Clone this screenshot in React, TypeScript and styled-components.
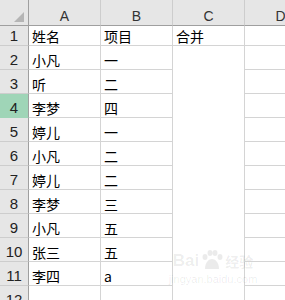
import React from "react";
import styled, { createGlobalStyle } from "styled-components";

const Global = createGlobalStyle`
  html, body { margin: 0; padding: 0; background: #ffffff; overflow: hidden; }
  #root { width: 285px; height: 300px; overflow: hidden; position: relative; }
`;

const Sheet = styled.div`
  display: grid;
  grid-template-columns: 29px 72px 72px 72px 72px;
  grid-template-rows: 26px 20px repeat(11, 24px);
  width: 317px;
  background: #ffffff;
`;

const Corner = styled.div`
  background: #e6e6e6;
  border-right: 1px solid #9f9f9f;
  border-bottom: 1px solid #9f9f9f;
  position: relative;
  &::after {
    content: "";
    position: absolute;
    right: 4px;
    bottom: 3px;
    width: 0;
    height: 0;
    border-left: 10px solid transparent;
    border-bottom: 10px solid #b5b5b5;
  }
`;

const ColHead = styled.div`
  background: #e6e6e6;
  border-right: 1px solid #cdcdcd;
  border-bottom: 1px solid #9f9f9f;
  display: flex;
  align-items: flex-end;
  justify-content: center;
  padding-bottom: 1px;
  box-sizing: border-box;
  font-family: "Liberation Sans", Arial, sans-serif;
  font-size: 14px;
  line-height: 16px;
  color: #333;
`;

const RowHead = styled.div<{ $active?: boolean }>`
  background: ${(p) => (p.$active ? "#9fd5b7" : "#e6e6e6")};
  border-right: 1px solid #9f9f9f;
  border-bottom: 1px solid ${(p) => (p.$active ? "#9fd5b7" : "#cdcdcd")};
  display: flex;
  align-items: flex-end;
  justify-content: center;
  padding-bottom: 1px;
  box-sizing: border-box;
  font-family: "Liberation Sans", Arial, sans-serif;
  font-size: 15px;
  line-height: 17px;
  color: #222;
`;

const Cell = styled.div`
  border-right: 1px solid #d4d4d4;
  border-bottom: 1px solid #d4d4d4;
  display: flex;
  align-items: flex-end;
  padding: 0 0 0 3px;
  box-sizing: border-box;
  font-family: "Noto Sans CJK SC", "Noto Sans", sans-serif;
  font-size: 14px;
  line-height: 18px;
  color: #000;
  white-space: nowrap;
  overflow: hidden;
`;

const Merged = styled(Cell)<{ $span: number }>`
  grid-row: span ${(p) => p.$span};
  border-bottom: none;
`;

const Watermark = styled.div`
  position: absolute;
  left: 166px;
  top: 250px;
  width: 94px;
  display: flex;
  flex-direction: column;
  align-items: center;
  pointer-events: none;
  color: rgba(0, 0, 0, 0.08);
  font-family: "Liberation Sans", Arial, sans-serif;
`;

const WmTop = styled.div`
  display: flex;
  align-items: flex-end;
  gap: 2px;
  font-size: 17px;
  font-weight: bold;
  line-height: 18px;
`;

const WmCn = styled.span`
  font-family: "Noto Sans CJK SC", sans-serif;
  font-size: 14px;
`;

const WmUrl = styled.div`
  font-size: 11px;
  line-height: 13px;
  margin-top: 3px;
`;

const rows: [string, string][] = [
  ["小凡", "一"],
  ["听", "二"],
  ["李梦", "四"],
  ["婷儿", "一"],
  ["小凡", "二"],
  ["婷儿", "二"],
  ["李梦", "三"],
  ["小凡", "五"],
  ["张三", "五"],
  ["李四", "a"],
  ["", ""],
];

export default function App() {
  return (
    <>
      <Global />
      <Sheet>
        <Corner />
        <ColHead>A</ColHead>
        <ColHead>B</ColHead>
        <ColHead>C</ColHead>
        <ColHead>D</ColHead>

        <RowHead>1</RowHead>
        <Cell>姓名</Cell>
        <Cell>项目</Cell>
        <Cell>合并</Cell>
        <Cell />

        {rows.map(([a, b], i) => (
          <React.Fragment key={i}>
            <RowHead $active={i + 2 === 4}>{i + 2}</RowHead>
            <Cell>{a}</Cell>
            <Cell>{b}</Cell>
            {i === 0 && <Merged $span={11} />}
            <Cell />
          </React.Fragment>
        ))}
      </Sheet>
      <Watermark>
        <WmTop>
          <span>Bai</span>
          <svg width="22" height="20" viewBox="0 0 22 20">
            <g fill="rgba(0,0,0,0.08)">
              <ellipse cx="4" cy="7" rx="2.5" ry="3" />
              <ellipse cx="9" cy="3" rx="2.5" ry="3" />
              <ellipse cx="14" cy="3" rx="2.5" ry="3" />
              <ellipse cx="19" cy="7" rx="2.5" ry="3" />
              <path d="M4 19 C4 12 8 9 11 9 C14 9 18 12 18 19 Z" />
            </g>
          </svg>
          <WmCn>经验</WmCn>
        </WmTop>
        <WmUrl>jingyan.baidu.com</WmUrl>
      </Watermark>
    </>
  );
}
